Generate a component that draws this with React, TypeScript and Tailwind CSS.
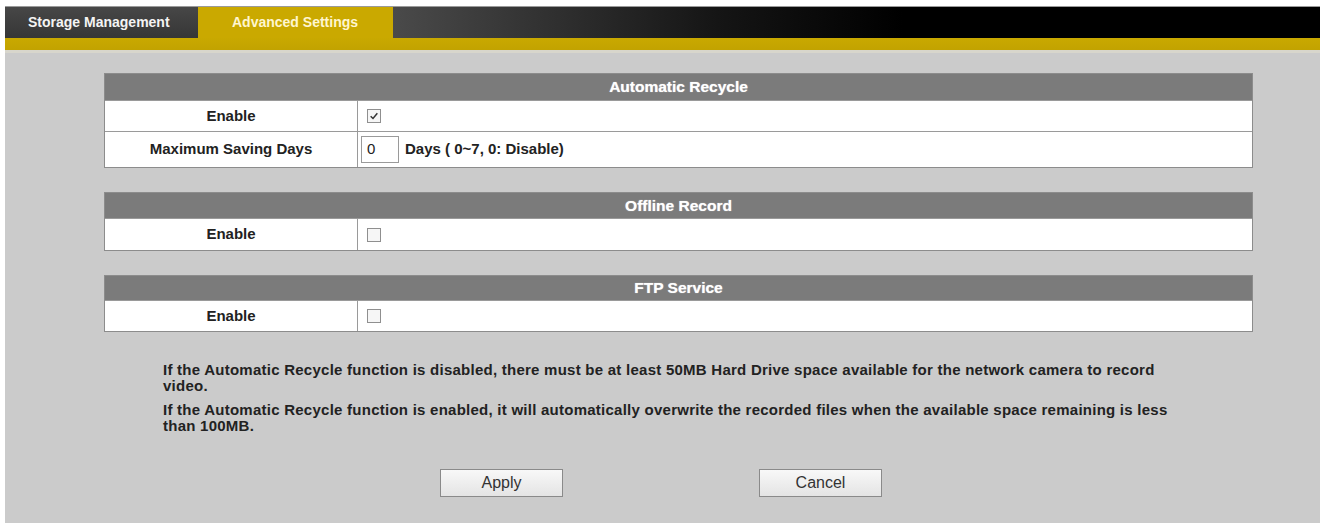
function Checkbox({ checked }: { checked?: boolean }) {
  return (
    <span className="w-[14px] h-[14px] border border-[#8f8f8f] bg-[#f6f6f6] flex items-center justify-center">
      {checked && (
        <svg viewBox="0 0 12 12" className="w-[10px] h-[10px]">
          <path d="M2 6.2 L4.8 9 L10 2.8" fill="none" stroke="#333" strokeWidth="1.8" />
        </svg>
      )}
    </span>
  )
}

function Row({ label, h, children }: { label: string; h: string; children: React.ReactNode }) {
  return (
    <div className={`flex border-t border-[#9a9a9a] ${h}`}>
      <div className="w-[253px] shrink-0 border-r border-[#9a9a9a] flex items-center justify-center font-bold text-[15px] text-[#222]">
        {label}
      </div>
      <div className="flex-1 flex items-center pl-[9px]">{children}</div>
    </div>
  )
}

function Section({ title, hh, children }: { title: string; hh: string; children: React.ReactNode }) {
  return (
    <div className="ml-[99px] w-[1149px] border border-[#8c8c8c] bg-white">
      <div className={`${hh} bg-[#7b7b7b] flex items-center justify-center text-white font-bold text-[15.5px] [text-shadow:0_0_1px_#ddd]`}>
        {title}
      </div>
      {children}
    </div>
  )
}

export default function App() {
  return (
    <div className="w-[1323px] h-[523px] bg-white pt-[6px] pl-[5px] pr-[3px] overflow-hidden font-['Liberation_Sans',Arial,sans-serif]">
      <div className="border-t border-[#9a9a9a]">
        <div className="flex h-[31px] text-[14px] font-bold">
          <div className="w-[193px] bg-[linear-gradient(#474747,#363636)] flex items-center pl-[23px] text-[#f4f4f4]">
            Storage Management
          </div>
          <div className="w-[195px] bg-[#caa900] flex items-center pl-[34px] text-[#fff6cf]">
            Advanced Settings
          </div>
          <div className="flex-1 bg-[linear-gradient(to_right,#4a4a4a,#151515_35%,#000_55%)]" />
        </div>
        <div className="h-[12px] bg-[linear-gradient(#c9a900,#c2a300)]" />
        <div className="h-[3px] bg-[#d8d6cc]" />
      </div>

      <div className="bg-[#cbcbcb] h-[480px] pt-[20px]">
        <Section title="Automatic Recycle" hh="h-[26px]">
          <Row label="Enable" h="h-[31px]">
            <Checkbox checked />
          </Row>
          <Row label="Maximum Saving Days" h="h-[36px]">
            <div className="-ml-[6px] w-[38px] h-[27px] border border-[#9a9a9a] bg-white flex items-center pl-[5px] text-[15px] text-[#222]">
              0
            </div>
            <span className="ml-[6px] font-bold text-[15px] text-[#222]">Days ( 0~7, 0: Disable)</span>
          </Row>
        </Section>

        <div className="mt-[24px]">
          <Section title="Offline Record" hh="h-[25px]">
            <Row label="Enable" h="h-[32px]">
              <Checkbox />
            </Row>
          </Section>
        </div>

        <div className="mt-[24px]">
          <Section title="FTP Service" hh="h-[24px]">
            <Row label="Enable" h="h-[31px]">
              <Checkbox />
            </Row>
          </Section>
        </div>

        <div className="ml-[158px] w-[1022px] mt-[30px] text-[15px] tracking-[0.25px] font-bold leading-[16px] text-[#222]">
          <p>
            If the Automatic Recycle function is disabled, there must be at least 50MB Hard Drive space available for the network camera to record video.
          </p>
          <p className="mt-[8px]">
            If the Automatic Recycle function is enabled, it will automatically overwrite the recorded files when the available space remaining is less than 100MB.
          </p>
        </div>

        <div className="mt-[35px] pr-[3px] flex justify-center gap-[196px]">
          <button className="w-[123px] h-[28px] border border-[#8a8a8a] bg-[linear-gradient(#f8f8f8,#e4e4e4)] text-[16px] text-[#333]">
            Apply
          </button>
          <button className="w-[123px] h-[28px] border border-[#8a8a8a] bg-[linear-gradient(#f8f8f8,#e4e4e4)] text-[16px] text-[#333]">
            Cancel
          </button>
        </div>
      </div>
    </div>
  )
}
